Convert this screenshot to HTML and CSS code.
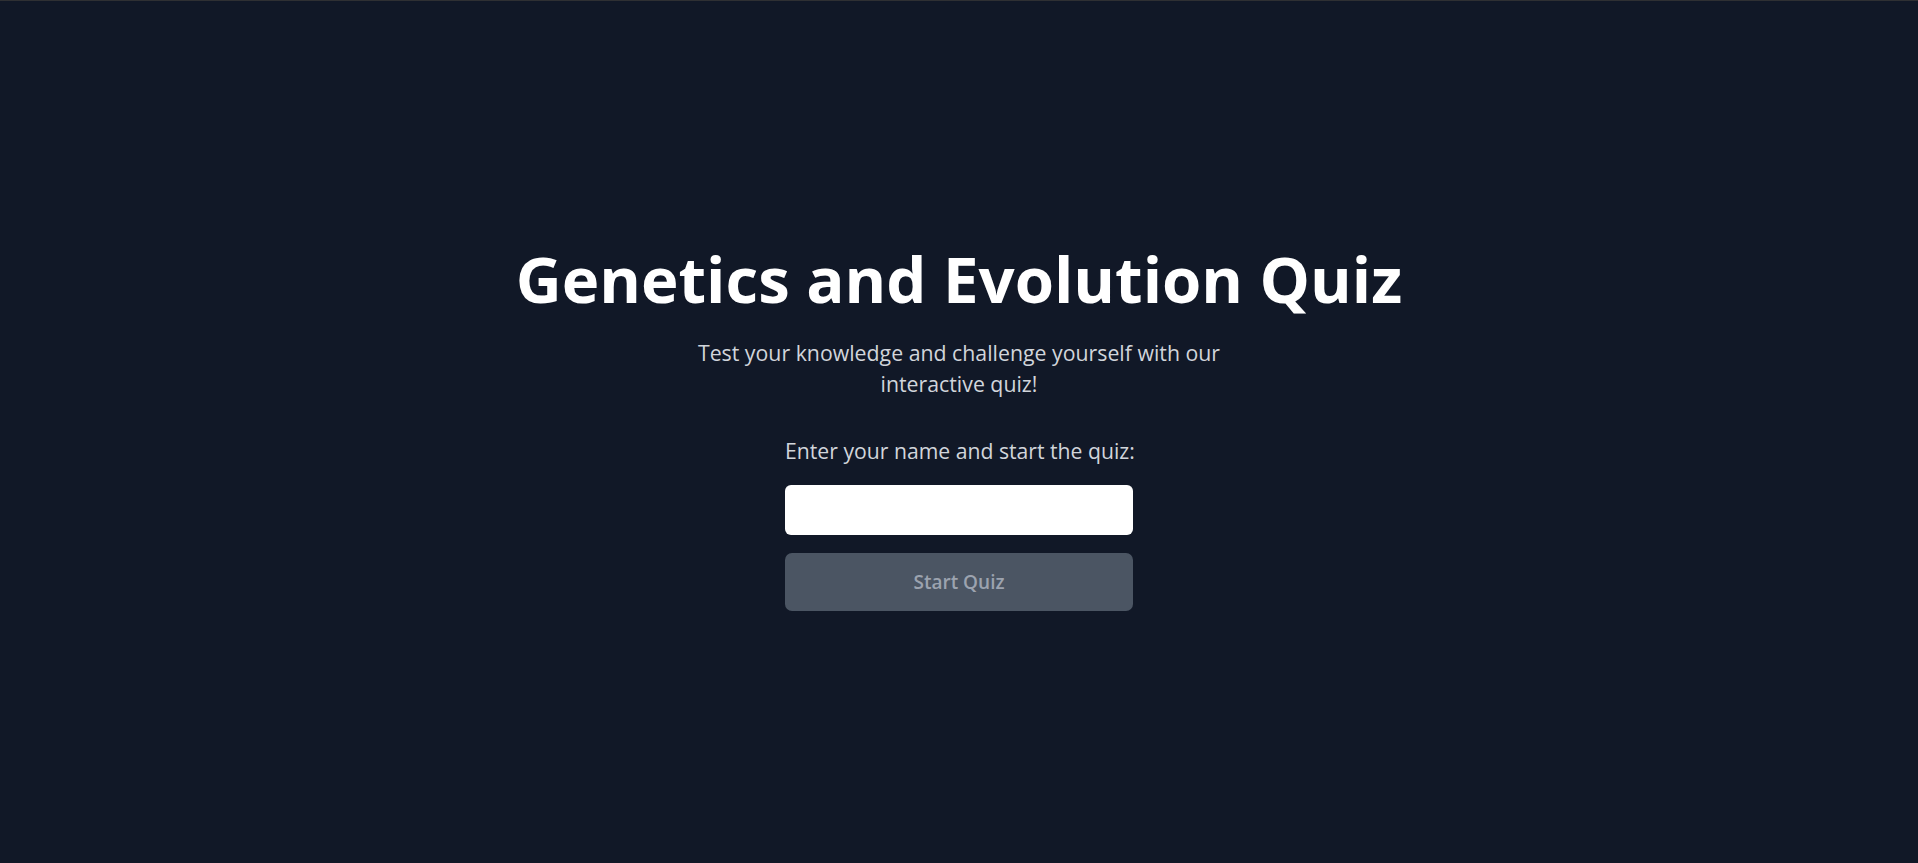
FILE: index.html
```html
<!DOCTYPE html>
<html lang="en">
<head>
<meta charset="utf-8">
<title>Genetics and Evolution Quiz</title>
<link rel="stylesheet" href="styles.css">
</head>
<body>
<main class="page">
  <section class="intro">
    <h1 class="title">Genetics and Evolution Quiz</h1>
    <p class="subtitle">Test your knowledge and challenge yourself with our interactive quiz!</p>
    <form class="start-form">
      <label class="label" for="name">Enter your name and start the quiz:</label>
      <input class="name-input" id="name" type="text">
      <button class="start-btn" type="button" disabled>Start Quiz</button>
    </form>
  </section>
</main>
</body>
</html>
```
FILE: styles.css
```css
* { box-sizing: border-box; }
html, body { margin: 0; padding: 0; }
body {
  background: #111827;
  font-family: "Open Sans", "Noto Sans", sans-serif;
  border-top: 1px solid #2f3033;
}
.page {
  min-height: 862px;
  padding-bottom: 9px;
  display: flex;
  align-items: center;
  justify-content: center;
}
.intro {
  display: flex;
  flex-direction: column;
  align-items: center;
  text-align: center;
}
.title {
  margin: 0;
  color: #ffffff;
  font-size: 63.5px;
  font-weight: 700;
  line-height: 68px;
  letter-spacing: 0;
}
.subtitle {
  margin: 24px 0 0;
  max-width: 540px;
  color: #d1d5db;
  font-size: 21.3px;
  line-height: 31px;
}
.start-form {
  margin-top: 38px;
  width: 348px;
  display: flex;
  flex-direction: column;
  align-items: stretch;
}
.label {
  color: #d1d5db;
  font-size: 21.2px;
  line-height: 28px;
  text-align: left;
  white-space: nowrap;
}
.name-input {
  margin-top: 20px;
  height: 50px;
  border: none;
  border-radius: 6px;
  background: #ffffff;
  padding: 0 12px;
  font-size: 18px;
  font-family: inherit;
}
.start-btn {
  margin-top: 18px;
  height: 58px;
  border: none;
  border-radius: 7px;
  background: #4b5563;
  color: #9ca3af;
  font-family: inherit;
  font-size: 19px;
  font-weight: 600;
}
```
